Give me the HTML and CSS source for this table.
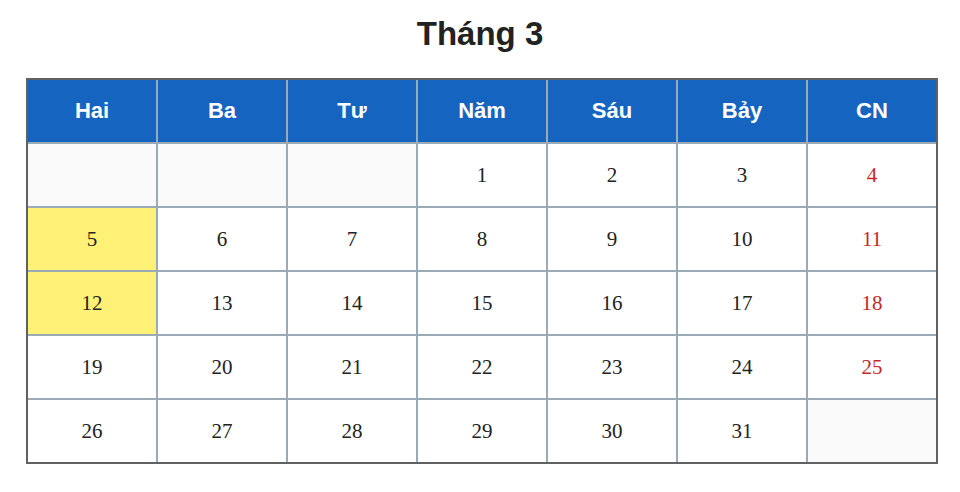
FILE: index.html
```html
<!DOCTYPE html>
<html lang="vi">
<head>
<meta charset="utf-8">
<title>Tháng 3</title>
<link rel="stylesheet" href="styles.css">
</head>
<body>
<div class="page">
  <h1 class="title">Tháng 3</h1>
  <table class="cal">
    <colgroup>
      <col class="c"><col class="c"><col class="c"><col class="c"><col class="c"><col class="c"><col class="c-last">
    </colgroup>
    <thead>
      <tr><th>Hai</th><th>Ba</th><th>Tư</th><th>Năm</th><th>Sáu</th><th>Bảy</th><th>CN</th></tr>
    </thead>
    <tbody>
      <tr><td class="empty"></td><td class="empty"></td><td class="empty"></td><td>1</td><td>2</td><td>3</td><td class="sun">4</td></tr>
      <tr><td class="hl">5</td><td>6</td><td>7</td><td>8</td><td>9</td><td>10</td><td class="sun">11</td></tr>
      <tr><td class="hl">12</td><td>13</td><td>14</td><td>15</td><td>16</td><td>17</td><td class="sun">18</td></tr>
      <tr><td>19</td><td>20</td><td>21</td><td>22</td><td>23</td><td>24</td><td class="sun">25</td></tr>
      <tr><td>26</td><td>27</td><td>28</td><td>29</td><td>30</td><td>31</td><td class="empty"></td></tr>
    </tbody>
  </table>
</div>
</body>
</html>
```

FILE: styles.css
```css
html, body {
  margin: 0;
  padding: 0;
  background: #ffffff;
}
.page {
  padding: 14px 0 0 26px;
}
.title {
  margin: 0 26px 0 0;
  height: 64px;
  line-height: 40px;
  text-align: center;
  font-family: "Liberation Sans", Arial, sans-serif;
  font-weight: bold;
  font-size: 33px;
  color: #222222;
}
.cal {
  width: 912px;
  table-layout: fixed;
  border-collapse: separate;
  border-spacing: 0;
  border: 2px solid #616161;
}
.cal col.c {
  width: 130px;
}
.cal col.c-last {
  width: 128px;
}
.cal th, .cal td {
  box-sizing: border-box;
  height: 64px;
  padding: 0;
  border-right: 2px solid #9aabb7;
  border-bottom: 2px solid #9aabb7;
  text-align: center;
  vertical-align: middle;
}
.cal th:last-child, .cal td:last-child {
  border-right: 0;
}
.cal tbody tr:last-child td {
  border-bottom: 0;
  height: 62px;
}
.cal th {
  background: #1565c0;
  color: #ffffff;
  font-family: "Liberation Sans", Arial, sans-serif;
  font-weight: bold;
  font-size: 22px;
}
.cal td {
  background: #ffffff;
  color: #222222;
  font-family: "Liberation Serif", "Times New Roman", serif;
  font-size: 21px;
}
.cal td.empty {
  background: #fafafa;
}
.cal td.hl {
  background: #fff176;
}
.cal td.sun {
  color: #c62828;
}
```
